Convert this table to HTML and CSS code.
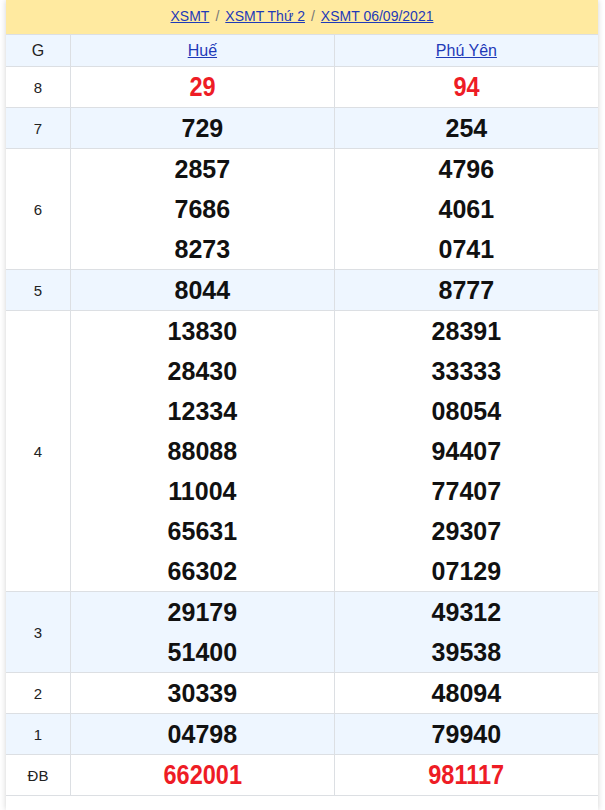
FILE: index.html
```html
<!DOCTYPE html>
<html lang="vi">
<head>
<meta charset="utf-8">
<link rel="stylesheet" href="styles.css">
</head>
<body>
<div class="box">
  <div class="crumbs">
    <a href="#">XSMT</a><span class="sep">/</span><a href="#">XSMT Thứ 2</a><span class="sep">/</span><a href="#">XSMT 06/09/2021</a>
  </div>
  <table class="kq">
    <tr class="alt head"><td class="g">G</td><td><a href="#">Huế</a></td><td><a href="#">Phú Yên</a></td></tr>
    <tr><td class="g">8</td><td class="n red"><span>29</span></td><td class="n red"><span>94</span></td></tr>
    <tr class="alt"><td class="g">7</td><td class="n">729</td><td class="n">254</td></tr>
    <tr><td class="g">6</td><td class="n"><div>2857</div><div>7686</div><div>8273</div></td><td class="n"><div>4796</div><div>4061</div><div>0741</div></td></tr>
    <tr class="alt"><td class="g">5</td><td class="n">8044</td><td class="n">8777</td></tr>
    <tr><td class="g">4</td><td class="n"><div>13830</div><div>28430</div><div>12334</div><div>88088</div><div>11004</div><div>65631</div><div>66302</div></td><td class="n"><div>28391</div><div>33333</div><div>08054</div><div>94407</div><div>77407</div><div>29307</div><div>07129</div></td></tr>
    <tr class="alt"><td class="g">3</td><td class="n"><div>29179</div><div>51400</div></td><td class="n"><div>49312</div><div>39538</div></td></tr>
    <tr><td class="g">2</td><td class="n">30339</td><td class="n">48094</td></tr>
    <tr class="alt"><td class="g">1</td><td class="n">04798</td><td class="n">79940</td></tr>
    <tr><td class="g">ĐB</td><td class="n red"><span>662001</span></td><td class="n red"><span>981117</span></td></tr>
  </table>
</div>
</body>
</html>
```
FILE: styles.css
```css
html, body { margin: 0; padding: 0; background: #fff; }
body { font-family: "Liberation Sans", Arial, sans-serif; color: #222; }
.box {
  margin: 0 7px 0 6px;
  min-height: 810px;
  background: #fff;
  box-shadow: 0 0 6px rgba(0,0,0,0.18);
}
.crumbs {
  background: #ffeaa0;
  height: 35px;
  display: flex;
  align-items: center;
  justify-content: center;
  font-size: 14px;
  border-bottom: 1px solid #dcdfe3;
  box-sizing: border-box;
  padding-bottom: 2px;
}
.crumbs a { color: #1e3ab8; text-decoration: underline; }
.crumbs .sep { color: #777; margin: 0 6px; }
.kq { width: 100%; border-collapse: collapse; table-layout: fixed; }
.kq td { border: 1px solid #dcdfe3; text-align: center; padding: 0; }
.kq tr td:first-child { border-left: none; }
.kq tr td:last-child { border-right: none; }
.kq tr:first-child td { border-top: none; }
.kq td.g { width: 64px; font-size: 15px; color: #222; }
.kq tr.head td { height: 31px; font-size: 16px; }
.kq tr.head a { color: #1e3ab8; }
.alt td { background: #eef6ff; }
.kq td.n { font-size: 25px; font-weight: 700; color: #111; line-height: 40px; }
.kq td.n div { height: 40px; }
.kq td.red { color: #ee1c25; font-size: 28px; }
.kq td.red span { display: inline-block; transform: scaleX(0.84); }
```
